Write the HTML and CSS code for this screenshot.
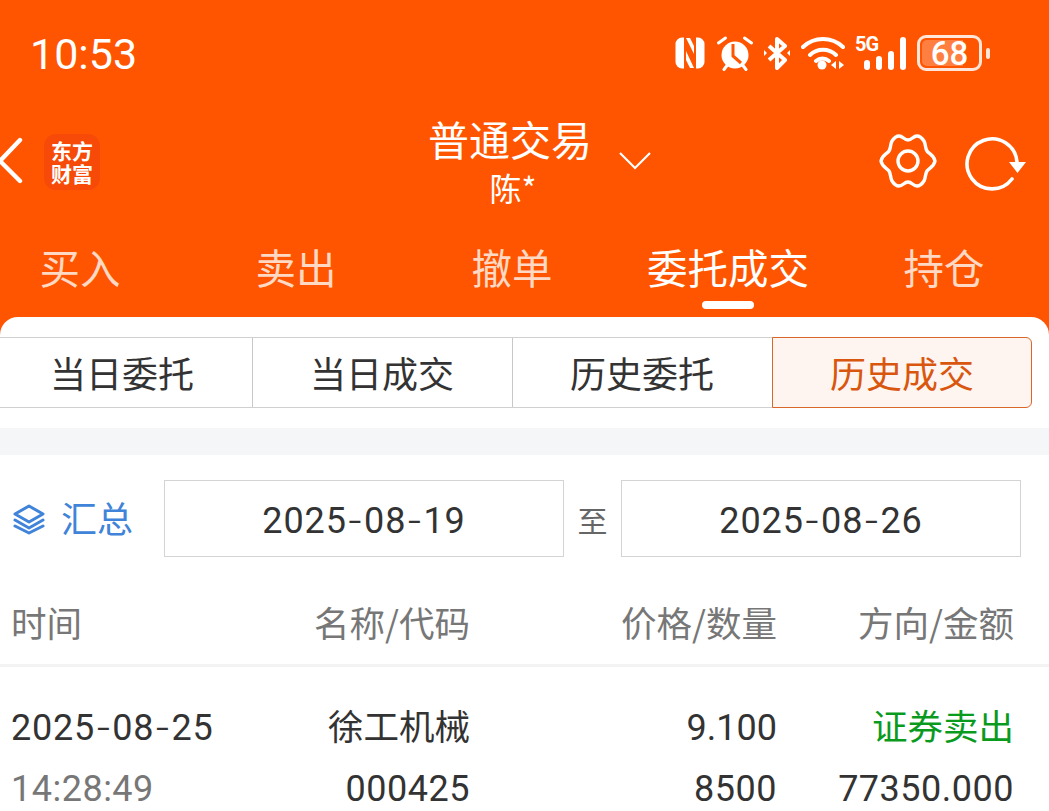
FILE: index.html
```html
<!DOCTYPE html>
<html lang="zh-CN">
<head>
<meta charset="utf-8">
<title>普通交易</title>
<link rel="stylesheet" href="styles.css">
</head>
<body>
<div class="page">
  <header class="top">
    <div class="status">
      <span class="clock">10:53</span>
      <div class="status-icons">
        <svg viewBox="0 0 32 34" width="32" height="34"><path d="M8 1.500H10V32.500H8A6.500 6.500 0 0 1 1.500 26V8A6.500 6.500 0 0 1 8 1.500zM24 1.500A6.500 6.500 0 0 1 30.500 8V26A6.500 6.500 0 0 1 24 32.500H22V1.500z" fill="#fff"/><path d="M12 2h4l4 8v8L12 2zM12 15l8 17h-4l-4-8zM12 9l8 16" fill="#fff"/><path d="M11 9l10 21" stroke="#ff5500" stroke-width="1.400" fill="none"/></svg>
        <svg viewBox="0 0 36 36" width="36" height="36"><circle cx="18" cy="20" r="13.500" fill="#fff"/><path d="M1.500 8l7-5M34.500 8l-7-5M7 34.500l3-4M29 34.500l-3-4" stroke="#fff" stroke-width="3" stroke-linecap="round"/><path d="M16 9v12l8 7" stroke="#ff5500" stroke-width="3" fill="none"/></svg>
        <svg viewBox="0 0 26 34" width="26" height="34"><path d="M5 10l16 14-8 8V3l8 7L5 24" fill="none" stroke="#fff" stroke-width="4" stroke-linejoin="round"/><path d="M0 14l3 3-3 3zM26 14l-3 3 3 3z" fill="#fff"/></svg>
        <svg viewBox="0 0 44 34" width="44" height="34"><path d="M2 11a29 29 0 0 1 40 0M9 19a19 19 0 0 1 26 0M15 25a10 10 0 0 1 13 0" fill="none" stroke="#fff" stroke-width="4" stroke-linecap="round"/><circle cx="21" cy="29" r="4.500" fill="#fff"/><path d="M35 25v8l-5-4zM38 25v8l5-4z" fill="#fff"/></svg>
        <div class="signal">
          <span class="five-g">5G</span>
          <i class="bar b1"></i><i class="bar b2"></i><i class="bar b3"></i><i class="bar b4"></i>
        </div>
        <div class="battery"><div class="battery-box"><span class="battery-fill"></span><span class="battery-num">68</span></div><i class="battery-cap"></i></div>
      </div>
    </div>
    <div class="nav">
      <div class="nav-left">
        <svg class="back" viewBox="0 0 24 48" width="24" height="48"><path d="M20 3L0 24l20 20" fill="none" stroke="#fff" stroke-width="4.400" stroke-linecap="round" stroke-linejoin="round"/></svg>
        <div class="logo">东方财富</div>
      </div>
      <div class="nav-title">
        <div class="title-text"><span class="title">普通交易</span><span class="sub">陈*</span></div>
        <svg class="chev" viewBox="0 0 34 20" width="34" height="20"><path d="M2 2l15 15L32 2" fill="none" stroke="#fff" stroke-width="2.200"/></svg>
      </div>
      <div class="nav-right">
        <svg viewBox="0 0 58 56" width="58" height="56"><path d="M20 3c4 0 5 4 9 4s5-4 9-4c3 0 5 2 7 5 2 4 1 7 3 10s7 4 8 10c-1 6-6 7-8 10s-1 6-3 10c-2 3-4 5-7 5-4 0-5-4-9-4s-5 4-9 4c-3 0-5-2-7-5-2-4-1-7-3-10s-7-4-8-10c1-6 6-7 8-10s1-6 3-10c2-3 4-5 7-5z" fill="none" stroke="#fff" stroke-width="3.400" stroke-linejoin="round"/><circle cx="29" cy="28" r="10" fill="none" stroke="#fff" stroke-width="3.400"/></svg>
        <svg class="refresh" viewBox="0 0 62 56" width="62" height="56"><path d="M52 27A25 25 0 1 0 47 44" fill="none" stroke="#fff" stroke-width="3.600" stroke-linecap="round"/><path d="M44 27h17l-8.500 11z" fill="#fff"/></svg>
      </div>
    </div>
    <nav class="tabs">
      <span class="tab">买入</span>
      <span class="tab">卖出</span>
      <span class="tab">撤单</span>
      <span class="tab active">委托成交</span>
      <span class="tab">持仓</span>
    </nav>
  </header>
  <main class="sheet">
    <div class="segments">
      <span class="seg">当日委托</span>
      <span class="seg">当日成交</span>
      <span class="seg">历史委托</span>
      <span class="seg on">历史成交</span>
    </div>
    <div class="strip"></div>
    <div class="filter">
      <div class="summary">
        <svg viewBox="0 0 32 32" width="32" height="32"><path d="M16 3l14 8-14 8-14-8z" fill="none" stroke="#3f84d9" stroke-width="3" stroke-linejoin="round"/><path d="M2 17l14 8 14-8M2 23l14 7 14-7" fill="none" stroke="#3f84d9" stroke-width="3" stroke-linecap="round" stroke-linejoin="round"/></svg>
        <span class="sum-label">汇总</span>
      </div>
      <div class="date"><span>2025<b class="dash">-</b>08<b class="dash">-</b>19</span></div>
      <span class="to">至</span>
      <div class="date"><span>2025<b class="dash">-</b>08<b class="dash">-</b>26</span></div>
    </div>
    <div class="row head">
      <span class="c1">时间</span><span class="c2">名称/代码</span><span class="c3">价格/数量</span><span class="c4">方向/金额</span>
    </div>
    <div class="row line1">
      <span class="c1">2025<b class="dash">-</b>08<b class="dash">-</b>25</span><span class="c2">徐工机械</span><span class="c3">9.100</span><span class="c4 sell">证券卖出</span>
    </div>
    <div class="row line2">
      <span class="c1 time">14:28:49</span><span class="c2">000425</span><span class="c3">8500</span><span class="c4">77350.000</span>
    </div>
  </main>
</div>
</body>
</html>
```
FILE: styles.css
```css
* { box-sizing: border-box; }
html, body { margin: 0; padding: 0; background: #ff5500; }
body { font-family: Roboto, "Noto Sans CJK SC", sans-serif; overflow: hidden; }
.page { width: 1049px; height: 811px; overflow: hidden; display: flex; flex-direction: column; }

.top { height: 317px; flex: none; color: #fff; background: #ff5500; font-family: "Noto Sans CJK SC", sans-serif; }

.status { height: 110px; display: flex; justify-content: space-between; align-items: center; padding: 0 59px 2px 30px; }
.clock { font: 400 43px/1 Roboto, sans-serif; }
.status-icons { display: flex; align-items: center; gap: 11px; height: 40px; margin-top: -2px; }
.signal { position: relative; display: flex; align-items: flex-end; gap: 6px; height: 34px; width: 50px; justify-content: flex-end; }
.five-g { position: absolute; left: -1px; top: -2px; font: 700 20px/1 Roboto, sans-serif; letter-spacing: -1px; }
.bar { display: block; width: 6px; background: #fff; border-radius: 3px; }
.b1 { height: 10px; } .b2 { height: 14px; } .b3 { height: 19px; } .b4 { height: 33px; }
.battery { display: flex; align-items: center; gap: 4px; }
.battery-box { position: relative; width: 65px; height: 36px; border: 3px solid #ffe6d9; border-radius: 9px; display: flex; align-items: center; justify-content: center; overflow: hidden; }
.battery-fill { position: absolute; left: 2px; top: 2px; bottom: 2px; width: 41px; background: #ff7f40; border-radius: 5px 0 0 5px; }
.battery-num { position: relative; font: 500 33px/1 Roboto, sans-serif; }
.battery-cap { display: block; width: 4px; height: 11px; border-radius: 2px; background: #ffe6d9; }

.nav { height: 116px; position: relative; display: flex; justify-content: space-between; align-items: flex-start; }
.nav-left { display: flex; align-items: flex-start; gap: 20px; padding-top: 29px; }
.back { margin-top: -2px; }
.logo { width: 56px; height: 56px; margin-top: -5px; padding: 5px 7px; border-radius: 12px; background: #f74a08; font: 700 21px/23px "Noto Sans CJK SC", sans-serif; word-break: break-all; text-align: center; }
.nav-title { position: absolute; left: 430px; top: 2px; display: flex; align-items: flex-start; }
.title-text { display: flex; flex-direction: column; align-items: center; width: 160px; }
.title { font-size: 41px; line-height: 52px; white-space: nowrap; }
.sub { font-size: 32px; line-height: 40px; margin-top: 3px; margin-left: 6px; }
.chev { margin: 39px 0 0 28px; }
.nav-right { display: flex; gap: 28px; padding: 23px 22px 0 0; align-items: flex-start; }
.refresh { margin-top: 2px; }

.tabs { display: grid; grid-template-columns: repeat(5, 216px); margin-left: -28px; width: 1080px; }
.tab { position: relative; text-align: center; font-size: 40.500px; line-height: 52px; height: 91px; padding-top: 15px; color: #ffd9c4; white-space: nowrap; }
.tab.active { color: #fff; }
.tab.active::after { content: ""; position: absolute; left: 82px; right: 82px; top: 75px; height: 8px; border-radius: 4px; background: #fff; }

.sheet { flex: 1; background: #fff; border-radius: 18px 18px 0 0; font-family: Roboto, "Noto Sans CJK SC", sans-serif; }
.segments { display: grid; grid-template-columns: repeat(4, 260px); margin: 20px 0 0 -8px; height: 71px; }
.seg { display: flex; align-items: center; justify-content: center; padding-bottom: 2px; font: 400 36px/1 "Noto Sans CJK SC", sans-serif; color: #333; border: 1px solid #d0d0d0; border-width: 1px 0; box-shadow: 1px 0 0 #c8c8c8; }
.seg.on { color: #d9560f; background: #fff5f0; border: 1px solid #d9662a; border-radius: 0 6px 6px 0; box-shadow: none; }

.strip { height: 27px; margin-top: 20px; background: #f5f6f8; }

.filter { display: flex; align-items: center; height: 77px; margin-top: 25px; }
.summary { width: 164px; padding-left: 13px; display: flex; align-items: center; gap: 16px; color: #3f84d9; font: 400 36px/1 "Noto Sans CJK SC", sans-serif; }
.sum-label { margin-top: -4px; }
.date { width: 400px; height: 77px; padding-top: 3px; border: 1px solid #d4d4d4; display: flex; align-items: center; justify-content: center; font: 400 36px/1 Roboto, sans-serif; color: #333; letter-spacing: 0.9px; }
.dash { font: 300 36px/1 Inter, sans-serif; }
.to { width: 57px; text-align: center; font: 400 30px/1 "Noto Sans CJK SC", sans-serif; color: #666; }

.row { display: grid; grid-template-columns: 180px 279px 307px 237px; padding-left: 11px; white-space: nowrap; }
.row span { text-align: right; }
.row .c1 { text-align: left; }
.head { height: 84px; margin-top: 26px; padding-top: 16px; border-bottom: 3px solid #f3f3f3; color: #777; font: 400 35.500px/46px "Noto Sans CJK SC", sans-serif; }
.line1, .line2 { color: #333; font: 400 36px/46px Roboto, "Noto Sans CJK SC", sans-serif; letter-spacing: 0.5px; }
.line1 { margin-top: 35px; }
.line1 .c1 { padding-top: 3px; letter-spacing: 0.8px; }
.line1 .c3 { padding-top: 3px; letter-spacing: 0; }
.line2 { margin-top: 15px; }
.line1 .c2, .line1 .c4 { letter-spacing: 0; font-size: 35.500px; font-family: "Noto Sans CJK SC", sans-serif; }
.time { color: #777; }
.sell { color: #0a9a1e; }
```
